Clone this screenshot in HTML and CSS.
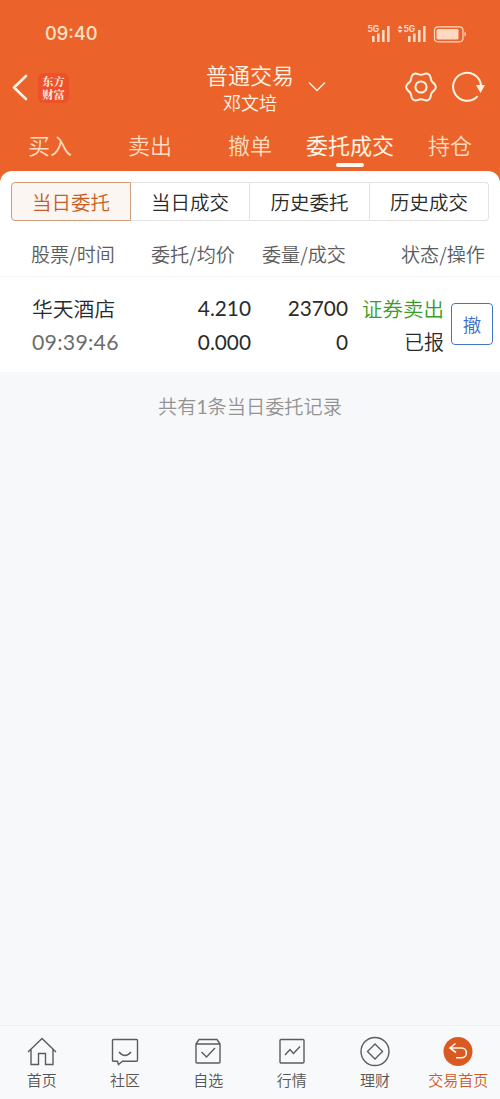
FILE: index.html
```html
<!DOCTYPE html>
<html lang="zh-CN">
<head>
<meta charset="utf-8">
<title>普通交易</title>
<link rel="stylesheet" href="styles.css">
</head>
<body>
<div class="app">
  <header class="top">
    <div class="status">
      <span class="clock">09:40</span>
      <svg class="signals" width="100" height="24" viewBox="0 0 100 24">
        <g fill="#ffd9c2">
          <text x="0.5" y="10" class="net">5G</text>
          <rect x="5" y="14" width="2.6" height="6"/><rect x="10" y="11.5" width="2.6" height="8.5"/><rect x="15" y="8" width="2.6" height="12"/><rect x="20" y="4" width="2.6" height="16"/>
          <path d="M30.500 6.500l2.500-3 2.500 3zM30.500 8l2.500 3 2.500-3z"/>
          <text x="36.500" y="10" class="net">5G</text>
          <rect x="41" y="14" width="2.6" height="6"/><rect x="46" y="11.500" width="2.6" height="8.5"/><rect x="51" y="8" width="2.6" height="12"/><rect x="56" y="4" width="2.6" height="16"/>
          <rect x="69.500" y="7" width="22" height="10.500" rx="1.500"/>
          <path d="M97.500 9.500v5q1.500-.5 1.500-2.500t-1.500-2.500z"/>
        </g>
        <rect x="67.500" y="4.800" width="28.500" height="15" rx="3.500" fill="none" stroke="#ffd9c2" stroke-width="1.200"/>
      </svg>
    </div>
    <div class="nav">
      <div class="nav-left">
        <svg width="18" height="28" viewBox="0 0 18 28"><path d="M15 3L3 14.500 15 26" fill="none" stroke="#fff4e4" stroke-width="2.600" stroke-linecap="round" stroke-linejoin="round"/></svg>
        <div class="logo"><span>东方</span><span>财富</span></div>
      </div>
      <div class="nav-title">
        <div class="account">普通交易</div>
        <div class="user">邓文培</div>
      </div>
      <svg class="chevron" width="18" height="12" viewBox="0 0 18 12"><path d="M1 1.500l8 8 8-8" fill="none" stroke="#fff0e0" stroke-width="1.500"/></svg>
      <div class="nav-right">
        <svg width="32" height="32" viewBox="-16 -16 32 32" fill="none" stroke="#fff4e4" stroke-width="2"><path stroke-linejoin="round" d="M14.900 0C14.900 3.500 12.100 3.500 10.600 6.100S10.500 11.200 7.450 12.900S3 12.200 0 12.200S-4.400 14.650 -7.450 12.900S-9.100 8.700 -10.600 6.100S-14.900 3.500 -14.900 0S-12.100 -3.500 -10.600 -6.100S-10.500 -11.200 -7.450 -12.900S-3 -12.200 0 -12.200S4.400 -14.650 7.450 -12.900S9.100 -8.700 10.600 -6.100S14.900 -3.500 14.900 0Z"/><circle r="5.600"/></svg>
        <svg width="34" height="32" viewBox="0 0 34 32"><path d="M26 25.700A14 14 0 1 1 30 14" fill="none" stroke="#fff4e4" stroke-width="2" stroke-linecap="round"/><path d="M25 14h9l-4.500 8z" fill="#fff4e4"/></svg>
      </div>
    </div>
    <nav class="tabs">
      <a>买入</a><a>卖出</a><a>撤单</a><a class="current">委托成交</a><a>持仓</a>
    </nav>
  </header>
  <main class="sheet">
    <div class="segments">
      <a class="picked">当日委托</a><a>当日成交</a><a>历史委托</a><a>历史成交</a>
    </div>
    <div class="row head">
      <span>股票/时间</span><span>委托/均价</span><span>委量/成交</span><span>状态/操作</span>
    </div>
    <div class="row order">
      <div class="cell name"><span>华天酒店</span><span class="num muted">09:39:46</span></div>
      <div class="cell num"><span>4.210</span><span>0.000</span></div>
      <div class="cell num"><span>23700</span><span>0</span></div>
      <div class="cell"><span class="sell">证券卖出</span><span class="state">已报</span></div>
      <button class="cancel">撤</button>
    </div>
  </main>
  <p class="summary">共有<span class="count">1</span>条当日委托记录</p>
  <footer class="bottom">
    <a><svg width="32" height="32" viewBox="0 0 32 32"><path d="M2 17L16 3.500 30 17M5 14.500V29.500H12.500V18.500H19.500V29.500H27V14.500"/></svg><span>首页</span></a>
    <a><svg width="32" height="32" viewBox="0 0 32 32"><path d="M4.500 4.500H27.500Q28.500 4.500 28.500 5.500V25Q28.500 26.300 27.500 26.300H13.500L9.500 29.500 8.500 26.300H4.500Q3.500 26.300 3.500 25V5.500Q3.500 4.500 4.500 4.500M10 17q6 7 12 0"/></svg><span>社区</span></a>
    <a><svg width="32" height="32" viewBox="0 0 32 32"><path d="M4 9L7 4.500H25L28 9M4 9H28V27Q28 28 27 28H5Q4 28 4 27ZM9.500 17l5 5 8.500-9"/></svg><span>自选</span></a>
    <a><svg width="32" height="32" viewBox="0 0 32 32"><rect x="4" y="4.500" width="24" height="23.500" rx="1"/><path d="M9 20l5-5.500 3.500 4 6.500-7"/></svg><span>行情</span></a>
    <a><svg width="32" height="32" viewBox="0 0 32 32"><circle cx="16" cy="16.500" r="14"/><path d="M16 9l7.500 7.500-7.500 7.500-7.500-7.500z"/></svg><span>理财</span></a>
    <a class="active"><svg width="32" height="32" viewBox="0 0 32 32"><circle class="disc" cx="16" cy="16.500" r="14.500"/><path class="arrow" d="M13.500 8.500l-5.500 4.500 6 4.500M8 13H19.500a4.900 4.900 0 0 1 0 9.800H14"/></svg><span>交易首页</span></a>
  </footer>
</div>
</body>
</html>
```

FILE: styles.css
```css
* { box-sizing: border-box; }
body { margin: 0; font-family: "Noto Sans CJK SC", sans-serif; font-weight: 350; color: #2a2a2a; }
.app { width: 500px; height: 1099px; display: flex; flex-direction: column; background: #f7f8fa; overflow: hidden; }
svg { display: block; flex: none; }

.top { height: 182px; flex: none; background: #eb632b; color: #fff4e4; }
.status { height: 60px; padding: 22px 33px 0 45px; display: flex; justify-content: space-between; }
.clock { font: 500 18.300px/22px Inter, sans-serif; color: #ffe0c4; }
.net { font: 700 8.500px Inter, sans-serif; letter-spacing: -.3px; }
.nav { height: 60px; display: grid; grid-template-columns: 206px 88px 60px 1fr; }
.nav-left { display: flex; gap: 9px; padding: 13px 0 0 11px; }
.logo { width: 31px; height: 30px; border-radius: 6px; background: #ed5129; display: flex; flex-direction: column; align-items: center; justify-content: center; font: 700 11.300px/13px "Noto Serif CJK SC", "Noto Sans CJK SC", sans-serif; color: #fff2e4; }
.nav-title { text-align: center; white-space: nowrap; }
.account { font-size: 22px; line-height: 28px; height: 29px; }
.user { font-size: 18px; line-height: 27px; }
.chevron { margin: 21px 0 0 14px; }
.nav-right { display: flex; gap: 14px; padding: 11px 0 0 51px; }
.tabs { display: grid; grid-template-columns: repeat(5, 100px); text-align: center; font-size: 22px; line-height: 48px; color: #ffdcc0; }
.tabs .current { color: #fff4e4; font-weight: 400; display: flex; flex-direction: column; align-items: center; }
.current::after { content: ""; width: 28px; height: 4px; border-radius: 2px; background: #fff8f0; margin-top: -5.500px; }

.sheet { position: relative; flex: none; margin-top: -11px; height: 201px; background: #fff; border-radius: 12px 12px 0 0; }
.segments { margin: 0 11px; padding-top: 11px; display: grid; grid-template-columns: 120px 119px 120px 119px; font-size: 19.500px; line-height: 37px; text-align: center; }
.segments a { height: 39px; border: 1px solid #e3e3e3; border-left: 0; }
.segments a:last-child { border-radius: 0 4px 4px 0; }
.segments .picked { border: 1px solid #cf9c7c; border-radius: 4px 0 0 4px; background: #fcf6f2; color: #c95c26; }
.row { display: grid; }
.head { height: 56px; padding-left: 31px; grid-template-columns: 120px 111px 139px 1fr; font-size: 19.100px; line-height: 67px; color: #5c5c5c; border-bottom: 1px solid #f3f3f3; white-space: nowrap; }
.order { grid-template-columns: 101px 118px 97px 96px 42px; padding: 14px 0 0 32px; font-size: 20.800px; }
.cell { display: flex; flex-direction: column; text-align: right; line-height: 34px; }
.name { text-align: left; }
.num { font-family: Lato, sans-serif; font-weight: 400; font-size: 20.800px; }
.muted { color: #6c6c6c; font-size: 21.300px; letter-spacing: .25px; }
.sell { color: #3d9c28; font-size: 20.500px; }
.state { font-size: 20px; }
.cancel { width: 42px; height: 42px; margin: 12px 0 0 7px; padding: 0; border: 1.500px solid #4377c8; border-radius: 4px; background: #fff; color: #3a70c8; font: 350 18.500px/38px "Noto Sans CJK SC", sans-serif; }
.summary { margin: 20px 0 0; text-align: center; font-size: 19.200px; line-height: 28px; color: #939393; }
.count { font-family: Lato, sans-serif; font-weight: 400; }

.bottom { margin-top: auto; height: 74px; border-top: 1px solid #efeff1; background: #f8f9fb; display: grid; grid-template-columns: repeat(6, 83.330px); padding-top: 9px; }
.bottom a { display: flex; flex-direction: column; align-items: center; font-size: 15px; line-height: 26px; color: #555; white-space: nowrap; }
.bottom svg { fill: none; stroke: #5c5c5c; stroke-width: 1.400; }
.bottom .active { color: #cf5a25; }
.bottom .disc { fill: #d95a22; stroke: none; }
.bottom .arrow { stroke: #fff4e8; stroke-width: 1.600; }
```
